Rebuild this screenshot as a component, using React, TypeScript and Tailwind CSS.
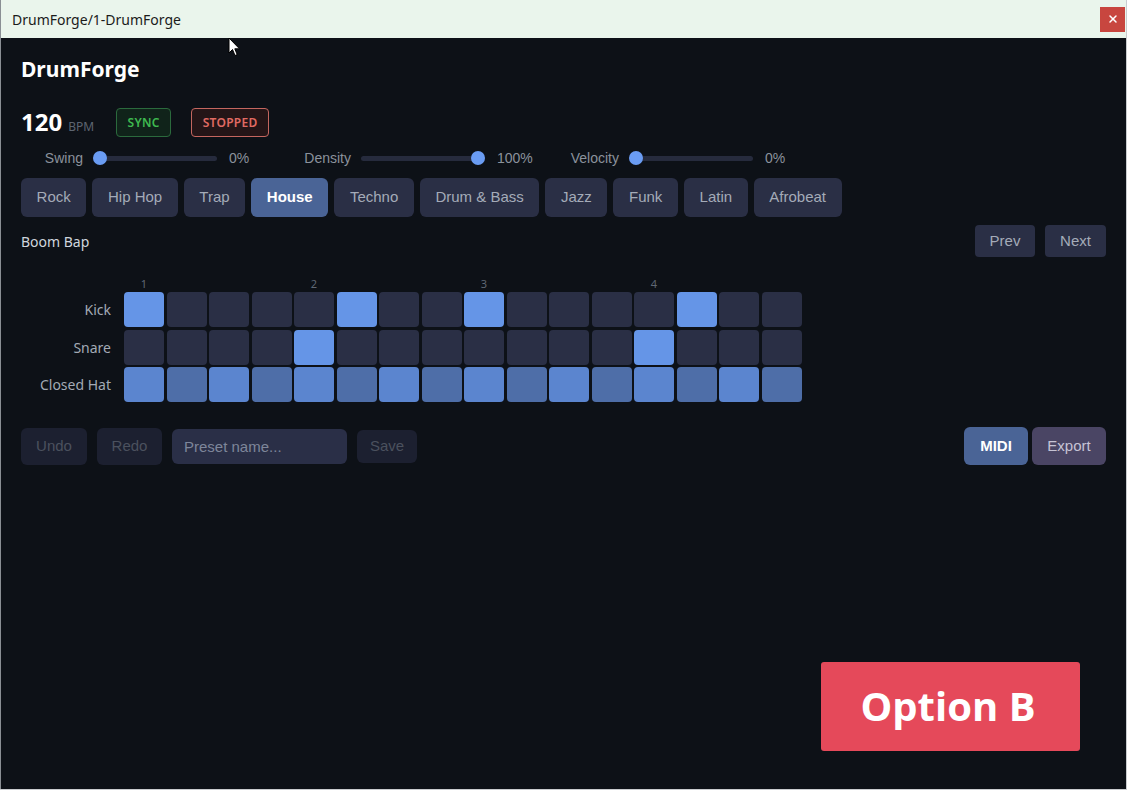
import { X } from "lucide-react";

const genres = ["Rock", "Hip Hop", "Trap", "House", "Techno", "Drum & Bass", "Jazz", "Funk", "Latin", "Afrobeat"];

const tracks: { name: string; steps: number[] }[] = [
  { name: "Kick", steps: [0, 5, 8, 13] },
  { name: "Snare", steps: [4, 12] },
  { name: "Closed Hat", steps: Array.from({ length: 16 }, (_, i) => i) },
];

const sliders = [
  { label: "Swing", v: 0 },
  { label: "Density", v: 100 },
  { label: "Velocity", v: 0 },
];

const ui = { fontFamily: '"Noto Sans", "Open Sans", sans-serif' };
const btn = { fontFamily: '"Liberation Sans", Arial, sans-serif' };

function cellColor(track: string, i: number, on: boolean) {
  if (!on) return "bg-[#2a2f45]";
  if (track === "Closed Hat") return i % 2 === 0 ? "bg-[#5b85cf]" : "bg-[#4e6ea8]";
  return "bg-[#6595e7]";
}

export default function App() {
  return (
    <div className="relative w-[1127px] h-[790px] bg-[#c9cccf] overflow-hidden" style={ui}>
      <div className="w-[1126px] h-[789px] flex flex-col border-l border-[#8a8f94] bg-[#0d1117]">
        {/* title bar */}
        <div className="h-[38px] shrink-0 bg-[#eaf5ec] flex items-center justify-between pl-[11px] pr-[1px]">
          <span className="text-[14px] text-[#1b1b1b]">DrumForge/1-DrumForge</span>
          <button className="w-[25px] h-[25px] bg-[#c8463f] grid place-items-center">
            <X className="w-3 h-3 text-white" strokeWidth={3} />
          </button>
        </div>

        <div className="flex-1 px-[20px] pt-[17px]">
          <h1 className="text-[21px] leading-[28px] font-bold text-white">DrumForge</h1>

          {/* transport */}
          <div className="mt-[25px] flex items-center gap-5 h-[29px]">
            <div className="flex items-baseline gap-[6px] mr-[2px]">
              <span className="text-[24px] font-bold text-white leading-none">120</span>
              <span className="text-[12px] text-[#5d6571]">BPM</span>
            </div>
            <span className="h-[29px] w-[55px] grid place-items-center rounded border border-[#2b6a3d] bg-[#10231a] text-[12px] font-semibold tracking-[0.3px] text-[#3fb950]">SYNC</span>
            <span className="h-[29px] w-[78px] grid place-items-center rounded border border-[#c4665f] bg-[#241517] text-[12px] font-semibold tracking-[0.3px] text-[#e06a63]">STOPPED</span>
          </div>

          {/* sliders */}
          <div className="mt-[11px] flex items-center gap-[22px] h-[20px]" style={btn}>
            {sliders.map((s) => (
              <div key={s.label} className="flex items-center gap-[10px]">
                <span className="w-[62px] text-right text-[14px] text-[#8b929c]">{s.label}</span>
                <div className="relative w-[124px] h-[14px] flex items-center">
                  <div className="w-full h-[5px] rounded-full bg-[#262b3d]" />
                  <div className="absolute w-[14px] h-[14px] rounded-full bg-[#6a9cf3]" style={{ left: `${(s.v / 100) * 110}px` }} />
                </div>
                <span className="w-[40px] text-[14px] text-[#8b929c] pl-[2px]">{s.v}%</span>
              </div>
            ))}
          </div>

          {/* genres */}
          <div className="mt-[10px] flex gap-[6px]" style={btn}>
            {genres.map((g) => (
              <button
                key={g}
                className={`h-[39px] px-[15.6px] rounded-md text-[15px] ${g === "House" ? "bg-[#4a6496] text-white font-bold" : "bg-[#2a2f45] text-[#a4abb8]"}`}
              >
                {g}
              </button>
            ))}
          </div>

          {/* pattern header */}
          <div className="mt-[8px] flex items-center justify-between h-[32px]">
            <span className="text-[14px] text-[#d0d6de]">Boom Bap</span>
            <div className="flex gap-[10px]" style={btn}>
              <button className="h-[32px] w-[60px] rounded bg-[#2a2f45] text-[15px] text-[#a4abb8]">Prev</button>
              <button className="h-[32px] w-[61px] rounded bg-[#2a2f45] text-[15px] text-[#a4abb8]">Next</button>
            </div>
          </div>

          {/* beat numbers */}
          <div className="mt-[18px] flex pl-[103px] h-[17px]">
            {Array.from({ length: 16 }, (_, i) => (
              <span key={i} className="w-[42.5px] text-center pr-[2.5px] text-[11px] leading-[17px] text-[#5f6773]">
                {i % 4 === 0 ? i / 4 + 1 : ""}
              </span>
            ))}
          </div>

          {/* grid */}
          <div className="flex flex-col gap-[2.5px]">
            {tracks.map((t) => (
              <div key={t.name} className="flex items-center">
                <span className="w-[90px] mr-[13px] text-right text-[14px] text-[#a3aab5]">{t.name}</span>
                <div className="flex gap-[2.5px]">
                  {Array.from({ length: 16 }, (_, i) => (
                    <div key={i} className={`w-[40px] h-[35px] rounded ${cellColor(t.name, i, t.steps.includes(i))}`} />
                  ))}
                </div>
              </div>
            ))}
          </div>

          {/* footer actions */}
          <div className="mt-[25px] flex items-center justify-between" style={btn}>
            <div className="flex items-center gap-[10px]">
              <button className="h-[37px] w-[66px] rounded-md bg-[#1c2030] text-[15px] text-[#4b515e]">Undo</button>
              <button className="h-[37px] w-[65px] rounded-md bg-[#1c2030] text-[15px] text-[#4b515e]">Redo</button>
              <input
                placeholder="Preset name..."
                className="h-[35px] w-[175px] rounded-md bg-[#2a2f47] px-3 text-[15px] text-[#c9d1d9] placeholder:text-[#7e869a] outline-none"
              />
              <button className="h-[33px] w-[60px] rounded-md bg-[#1c2030] text-[15px] text-[#4b515e]">Save</button>
            </div>
            <div className="flex items-center gap-[4px]">
              <button className="h-[38px] w-[64px] rounded-md bg-[#4a6496] text-[15px] font-bold text-white">MIDI</button>
              <button className="h-[38px] w-[74px] rounded-md bg-[#4a4564] text-[15px] text-[#c6c3d4]">Export</button>
            </div>
          </div>
        </div>
      </div>

      {/* overlay label */}
      <div className="absolute left-[821px] top-[662px] w-[259px] h-[89px] rounded-[3px] bg-[#e5495a] grid place-items-center pr-[5px] pb-[2px]">
        <span className="text-[40px] font-bold text-white" style={{ fontFamily: '"Open Sans", "Noto Sans", sans-serif' }}>Option B</span>
      </div>

      {/* mouse cursor */}
      <svg className="absolute left-[228px] top-[37px]" width="13" height="20" viewBox="0 0 13 20">
        <path d="M1 1 L1 16 L4.5 12.5 L7 18.5 L9.2 17.6 L6.8 11.8 L11.5 11.8 Z" fill="#fff" stroke="#000" strokeWidth="1" strokeLinejoin="round" />
      </svg>
    </div>
  );
}
